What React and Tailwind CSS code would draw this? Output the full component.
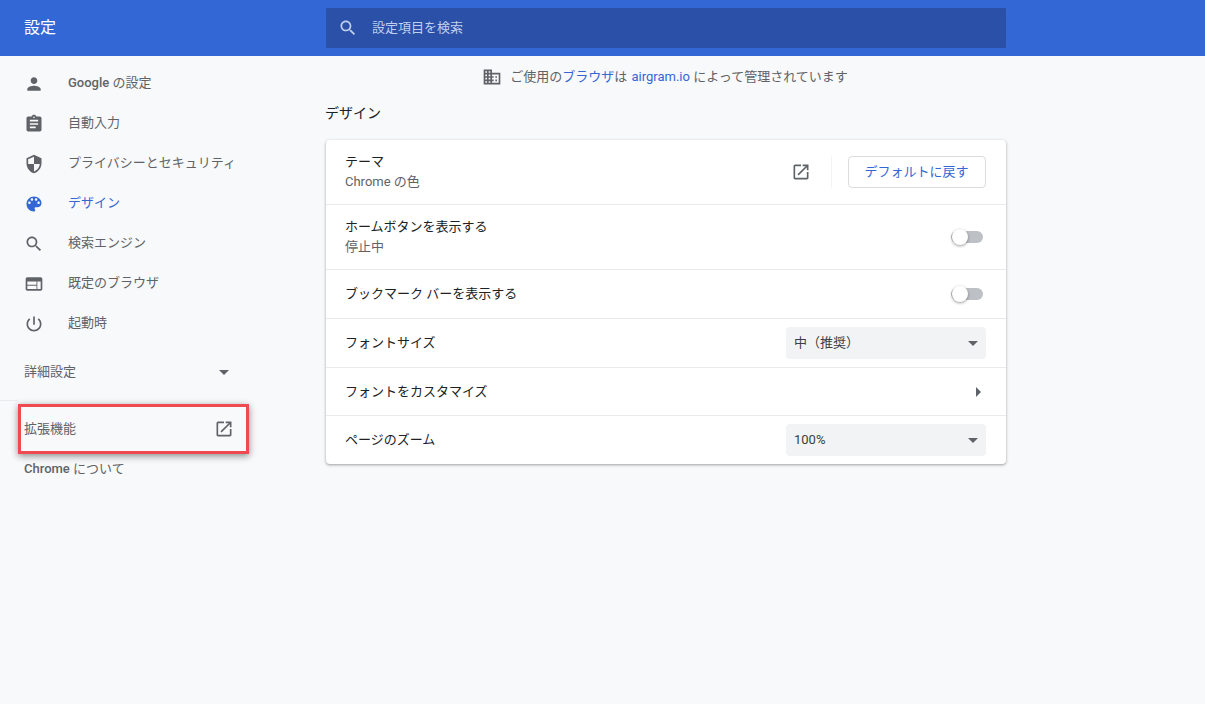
const P = {
  person: "M12 12c2.21 0 4-1.79 4-4s-1.79-4-4-4-4 1.79-4 4 1.79 4 4 4zm0 2c-2.67 0-8 1.34-8 4v2h16v-2c0-2.66-5.33-4-8-4z",
  assignment: "M19 3h-4.18C14.4 1.84 13.3 1 12 1c-1.3 0-2.4.84-2.82 2H5c-1.1 0-2 .9-2 2v14c0 1.1.9 2 2 2h14c1.1 0 2-.9 2-2V5c0-1.1-.9-2-2-2zm-7 0c.55 0 1 .45 1 1s-.45 1-1 1-1-.45-1-1 .45-1 1-1zm2 14H7v-2h7v2zm3-4H7v-2h10v2zm0-4H7V7h10v2z",
  security: "M12 1L3 5v6c0 5.55 3.84 10.74 9 12 5.16-1.26 9-6.45 9-12V5l-9-4zm0 10.99h7c-.53 4.12-3.28 7.79-7 8.94V12H5V6.3l7-3.11v8.8z",
  palette: "M12 3c-4.97 0-9 4.03-9 9s4.03 9 9 9c.83 0 1.5-.67 1.5-1.5 0-.39-.15-.74-.39-1.01-.23-.26-.38-.61-.38-.99 0-.83.67-1.5 1.5-1.5H16c2.76 0 5-2.24 5-5 0-4.42-4.03-8-9-8zm-5.5 9c-.83 0-1.5-.67-1.5-1.5S5.67 9 6.5 9 8 9.67 8 10.5 7.33 12 6.5 12zm3-4C8.67 8 8 7.33 8 6.5S8.67 5 9.5 5s1.5.67 1.5 1.5S10.33 8 9.5 8zm5 0c-.83 0-1.5-.67-1.5-1.5S13.67 5 14.5 5s1.5.67 1.5 1.5S15.33 8 14.5 8zm3 4c-.83 0-1.5-.67-1.5-1.5S16.67 9 17.5 9s1.5.67 1.5 1.5-.67 1.5-1.5 1.5z",
  search: "M15.5 14h-.79l-.28-.27C15.41 12.59 16 11.11 16 9.5 16 5.91 13.09 3 9.5 3S3 5.91 3 9.5 5.91 16 9.5 16c1.61 0 3.09-.59 4.23-1.57l.27.28v.79l5 4.99L20.49 19l-4.99-5zm-6 0C7.01 14 5 11.99 5 9.5S7.01 5 9.5 5 14 7.01 14 9.5 11.99 14 9.5 14z",
  web: "M20 4H4c-1.1 0-1.99.9-1.99 2L2 18c0 1.1.9 2 2 2h16c1.1 0 2-.9 2-2V6c0-1.1-.9-2-2-2zm-5 14H4v-4h11v4zm0-5H4V9h11v4zm5 5h-4V9h4v9z",
  power: "M13 3h-2v10h2V3zm4.83 2.17l-1.42 1.42C17.99 7.86 19 9.81 19 12c0 3.87-3.13 7-7 7s-7-3.13-7-7c0-2.19 1.01-4.14 2.58-5.42L6.17 5.17C4.23 6.82 3 9.26 3 12c0 4.97 4.03 9 9 9s9-4.03 9-9c0-2.74-1.23-5.18-3.17-6.83z",
  open: "M19 19H5V5h7V3H5c-1.11 0-2 .9-2 2v14c0 1.1.89 2 2 2h14c1.1 0 2-.9 2-2v-7h-2v7zM14 3v2h3.59l-9.83 9.83 1.41 1.41L19 6.41V10h2V3h-7z",
  domain: "M12 7V3H2v18h20V7H12zM6 19H4v-2h2v2zm0-4H4v-2h2v2zm0-4H4V9h2v2zm0-4H4V5h2v2zm4 12H8v-2h2v2zm0-4H8v-2h2v2zm0-4H8V9h2v2zm0-4H8V5h2v2zm10 12h-8v-2h2v-2h-2v-2h2v-2h-2V9h8v10zm-2-8h-2v2h2v-2zm0 4h-2v2h2v-2z",
};

function Icon({ d, className = "w-5 h-5" }) {
  return (
    <svg viewBox="0 0 24 24" className={className + " shrink-0 fill-current"}>
      <path d={d} />
    </svg>
  );
}

function Caret() {
  return <span className="w-0 h-0 border-x-[5px] border-x-transparent border-t-[5px] border-t-[#5f6368]" />;
}

const NAV = [
  ["person", <><span className="font-medium">Google</span> の設定</>, "google"],
  ["assignment", "自動入力", "autofill"],
  ["security", "プライバシーとセキュリティ", "privacy"],
  ["palette", "デザイン", "design", true],
  ["search", "検索エンジン", "search"],
  ["web", "既定のブラウザ", "browser"],
  ["power", "起動時", "startup"],
];

function Toggle() {
  return (
    <div className="relative w-[32px] h-[12px] rounded-full bg-[#bdc1c6] mr-[3px]">
      <span className="absolute left-[1px] top-[-2px] w-[16px] h-[16px] rounded-full bg-white shadow-[0_1px_3px_rgba(0,0,0,0.4)]" />
    </div>
  );
}

function Select({ label }) {
  return (
    <div className="w-[200px] h-[32px] bg-[#f1f3f4] rounded-[4px] flex items-center justify-between px-[8px] text-[13px] text-[#3c4043]">
      <span>{label}</span>
      <Caret />
    </div>
  );
}

function Row({ h, title, sub, children, first }) {
  return (
    <div className={"flex items-center justify-between pl-[19px] pr-[20px] " + h + (first ? "" : " border-t border-[#e8eaed]")}>
      <div className="leading-[20px]">
        <div className="text-[13px] text-[#202124]">{title}</div>
        {sub && <div className="text-[13px] text-[#5f6368]">{sub}</div>}
      </div>
      {children}
    </div>
  );
}

export default function App() {
  return (
    <div className="w-[1205px] h-[704px] overflow-hidden bg-[#f8f9fa] flex flex-col font-['Roboto','Noto_Sans_CJK_JP',sans-serif]">
      <header className="h-[56px] bg-[#3367d6] flex items-center shrink-0">
        <h1 className="w-[326px] pl-[24px] text-[16px] text-white font-normal">設定</h1>
        <div className="w-[680px] h-[40px] bg-[#2a50a8] rounded-[1px] flex items-center pl-[12px] text-[13px] text-[#c0cfef]">
          <Icon d={P.search} className="w-[20px] h-[20px]" />
          <span className="ml-[14px]">設定項目を検索</span>
        </div>
      </header>
      <div className="flex flex-1 min-h-0">
        <nav className="w-[266px] shrink-0 pt-[7px] text-[13px] text-[#5f6368]">
          {NAV.map(([ic, label, key, active]) => (
            <div key={key} className={"h-[40px] flex items-center pl-[24px] pt-[1px] " + (active ? "text-[#3367d6]" : "")}>
              <Icon d={P[ic]} className="w-[20px] h-[20px]" />
              <span className="ml-[24px] -mt-[1px]">{label}</span>
            </div>
          ))}
          <div className="h-[48px] mt-[5px] flex items-center justify-between pl-[24px] pr-[37px]">
            <span>詳細設定</span>
            <Caret />
          </div>
          <div className="h-[4px] w-[18px] mt-[4px] border-t border-[#e8eaed]" />
          <div className="ml-[18px] w-[231px] h-[50px] border-[3px] border-[#ee4a50] shadow-[0_2px_7px_rgba(0,0,0,0.45)] flex items-center justify-between pl-[3px] pr-[12px]">
            <span>拡張機能</span>
            <Icon d={P.open} className="w-[20px] h-[20px]" />
          </div>
          <div className="h-[30px] pl-[24px] flex items-center"><span><span className="font-medium">Chrome</span> について</span></div>
        </nav>
        <main className="w-[680px] ml-[60px]">
          <div className="h-[42px] pr-[2px] flex items-center justify-center text-[13px] text-[#5f6368]">
            <Icon d={P.domain} className="w-[20px] h-[20px] mr-[8px]" />
            <span>
              ご使用の<span className="text-[#3367d6]">ブラウザ</span>は<span className="text-[#3367d6] ml-[1px]"> airgram.io </span>によって管理されています
            </span>
          </div>
          <h2 className="h-[30px] flex items-center text-[14px] font-normal text-[#202124] -ml-[1px]">デザイン</h2>
          <section className="mt-[12px] bg-white rounded-[4px] shadow-[0_1px_2px_rgba(60,64,67,0.3),0_1px_3px_1px_rgba(60,64,67,0.15)]">
            <Row first h="h-[64px]" title="テーマ" sub="Chrome の色">
              <div className="flex items-center text-[#5f6368]">
                <Icon d={P.open} className="w-[20px] h-[20px]" />
                <div className="w-px h-[32px] bg-[#f1f3f4] ml-[20px] mr-[16px]" />
                <button className="w-[138px] h-[32px] pr-[1px] border border-[#dadce0] rounded-[4px] text-[13px] text-[#3367d6]">デフォルトに戻す</button>
              </div>
            </Row>
            <Row h="h-[65px]" title="ホームボタンを表示する" sub="停止中"><Toggle /></Row>
            <Row h="h-[49px]" title="ブックマーク バーを表示する"><Toggle /></Row>
            <Row h="h-[49px]" title="フォントサイズ"><Select label="中（推奨）" /></Row>
            <Row h="h-[48px]" title="フォントをカスタマイズ">
              <span className="w-0 h-0 mr-[5px] border-y-[5px] border-y-transparent border-l-[5px] border-l-[#5f6368]" />
            </Row>
            <Row h="h-[49px]" title="ページのズーム"><Select label="100%" /></Row>
          </section>
        </main>
      </div>
    </div>
  );
}
